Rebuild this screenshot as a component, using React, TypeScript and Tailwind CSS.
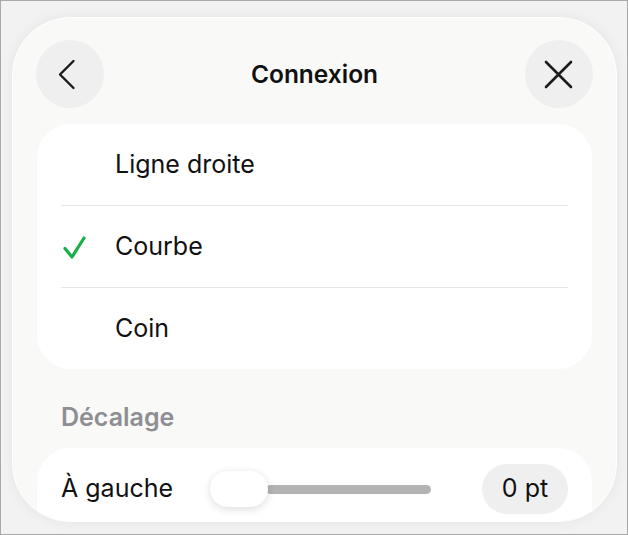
import React from "react";

function Row({ label, checked }: { label: string; checked?: boolean }) {
  return (
    <div className="relative flex h-[81px] items-center">
      {checked && (
        <svg className="absolute left-[24px] top-[27px]" width="28" height="28" viewBox="0 0 28 28" fill="none">
          <path d="M4 15.5 L11 24 L23 5" stroke="#1aaf4b" strokeWidth="3.2" strokeLinecap="round" strokeLinejoin="round" />
        </svg>
      )}
      <span className="pl-[78px] text-[25px] text-[#111]">{label}</span>
    </div>
  );
}

export default function App() {
  return (
    <div
      className="relative h-[535px] w-[628px] overflow-hidden border border-[#a9a9a9] bg-[#f2f2f2]"
      style={{ fontFamily: "Inter, 'Noto Sans', sans-serif" }}
    >
      <div className="ml-[11px] mt-[16px] h-[505px] w-[605px] overflow-hidden rounded-[58px] border border-white bg-[#f9f9f8] shadow-[0_0_14px_rgba(0,0,0,0.06)]">
        {/* header */}
        <div className="flex items-center justify-between px-[23px] pt-[22px]">
          <div className="flex h-[68px] w-[68px] items-center justify-center rounded-full bg-[#efefef]">
            <svg width="68" height="68" viewBox="0 0 68 68" fill="none">
              <path d="M37.5 21 L24 34.5 L37.5 48" stroke="#1c1c1e" strokeWidth="2.4" strokeLinecap="round" strokeLinejoin="round" />
            </svg>
          </div>
          <div className="text-[24.5px] font-semibold text-[#111]">Connexion</div>
          <div className="flex h-[68px] w-[68px] items-center justify-center rounded-full bg-[#efefef]">
            <svg width="68" height="68" viewBox="0 0 68 68" fill="none">
              <path d="M21 22 L46 47 M46 22 L21 47" stroke="#1c1c1e" strokeWidth="2.6" strokeLinecap="round" />
            </svg>
          </div>
        </div>

        {/* options card */}
        <div className="mx-[24px] mt-[16px] rounded-[34px] bg-white">
          <Row label="Ligne droite" />
          <div className="mx-[24px] h-px bg-[#e6e6e6]" />
          <Row label="Courbe" checked />
          <div className="mx-[24px] h-px bg-[#e6e6e6]" />
          <Row label="Coin" />
        </div>

        {/* section header */}
        <div className="mt-[32px] pl-[48px] text-[25px] font-semibold leading-[32px] text-[#8e8e93]">Décalage</div>

        {/* offset card */}
        <div className="mx-[24px] mt-[15px] flex h-[100px] items-start rounded-[34px] bg-white px-[24px] pt-[16px]">
          <div className="flex h-[50px] w-full items-center">
            <span className="w-[149px] text-[25px] text-[#111]">À gauche</span>
            <div className="relative flex h-[36px] w-[221px] items-center">
              <div className="ml-[56px] h-[9px] flex-1 rounded-full bg-[#b3b3b3]" />
              <div className="absolute left-0 top-0 h-[36px] w-[58px] rounded-full bg-white shadow-[0_2px_8px_rgba(0,0,0,0.14)]" />
            </div>
            <div className="ml-auto flex h-[50px] w-[86px] items-center justify-center rounded-full bg-[#efeff0] text-[25px] text-[#111]">
              0 pt
            </div>
          </div>
        </div>
      </div>
    </div>
  );
}
